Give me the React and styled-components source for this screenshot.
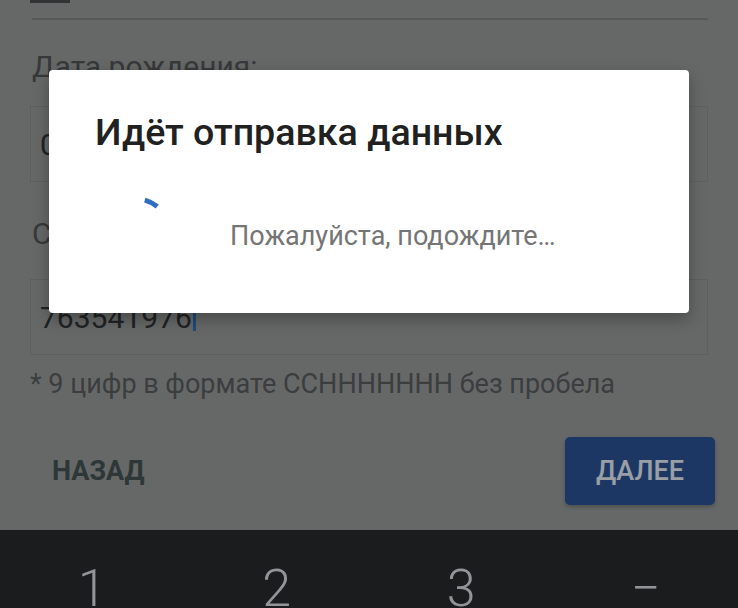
import React from 'react';
import styled, { createGlobalStyle } from 'styled-components';

const GlobalStyle = createGlobalStyle`
    html, body {
        margin: 0;
        padding: 0;
        background: #1b1c1e;
        font-family: Roboto, "Noto Sans", Arial, sans-serif;
    }
    * {
        box-sizing: border-box;
    }
`;

const Screen = styled.div`
    display: flex;
    flex-direction: column;
    width: 738px;
    height: 608px;
    overflow: hidden;
`;

const FormArea = styled.div`
    position: relative;
    height: 530px;
    flex-shrink: 0;
    padding: 0 23px 0 30px;
    background: #939596;
    overflow: hidden;
`;

const TopStub = styled.div`
    width: 40px;
    height: 3px;
    background: #484a4c;
`;

const Divider = styled.div`
    margin: 15px 7px 0 2px;
    height: 2px;
    background: #7c7e80;
`;

const Label = styled.div`
    margin-top: ${p => p.$top}px;
    padding-left: 2px;
    font-size: 30px;
    line-height: 34px;
    color: #4f5154;
`;

const Field = styled.div`
    display: flex;
    align-items: center;
    margin-top: ${p => p.$top}px;
    width: 678px;
    height: 76px;
    padding-left: 9px;
    border: 1px solid #86888b;
    font-size: 30px;
    color: #303133;
`;

const Caret = styled.span`
    display: inline-block;
    width: 3px;
    height: 28px;
    margin-left: 1px;
    background: #2c6ab7;
`;

const Hint = styled.div`
    margin-top: 14px;
    font-size: 27px;
    line-height: 30px;
    color: #56585b;
`;

const Actions = styled.div`
    display: flex;
    justify-content: space-between;
    align-items: center;
    margin-top: 38px;
`;

const TextButton = styled.button`
    border: none;
    background: none;
    padding: 0 0 0 22px;
    font-family: inherit;
    font-size: 27px;
    font-weight: 700;
    color: #43504f;
`;

const PrimaryButton = styled.button`
    width: 150px;
    height: 68px;
    border: none;
    border-radius: 5px;
    background: #29508f;
    box-shadow: 0 2px 4px rgba(0, 0, 0, 0.25);
    font-family: inherit;
    font-size: 27px;
    font-weight: 500;
    color: #dde3ec;
`;

const Backdrop = styled.div`
    position: absolute;
    inset: 0;
    display: flex;
    justify-content: center;
    align-items: flex-start;
    padding-top: 70px;
    background: rgba(0, 0, 0, 0.3);
`;

const Dialog = styled.div`
    width: 640px;
    height: 243px;
    padding: 40px 46px 0;
    background: #fff;
    border-radius: 4px;
    box-shadow: 0 6px 16px rgba(0, 0, 0, 0.3);
`;

const Title = styled.div`
    font-size: 37.6px;
    line-height: 44px;
    font-weight: 500;
    color: #212121;
`;

const Progress = styled.div`
    display: flex;
    align-items: center;
    margin-top: 41px;
    padding-left: 3px;
`;

const Message = styled.div`
    margin-left: 56px;
    padding-top: 6px;
    font-size: 27px;
    color: #757575;
`;

const Keyboard = styled.div`
    display: grid;
    grid-template-columns: repeat(4, 1fr);
    flex: 1;
    background: #1b1c1e;
`;

const Key = styled.div`
    padding-top: 33px;
    text-align: center;
    font-size: 52px;
    line-height: 1;
    font-weight: 300;
    color: #939497;
`;

const Spinner = () => (
    <svg width="76" height="76" viewBox="0 0 76 76">
        <circle
            cx="38"
            cy="38"
            r="34"
            fill="none"
            stroke="#2f6cc3"
            strokeWidth="5"
            strokeDasharray="14 400"
            transform="rotate(-75 38 38)"
        />
    </svg>
);

const App = () => (
    <Screen>
        <GlobalStyle />
        <FormArea>
            <TopStub />
            <Divider />
            <Label $top={30}>Дата рождения:</Label>
            <Field $top={22}>05.11.1985</Field>
            <Label $top={35}>Серия и номер паспорта:</Label>
            <Field $top={28}>
                763541976<Caret />
            </Field>
            <Hint>* 9 цифр в формате ССННННННН без пробела</Hint>
            <Actions>
                <TextButton>НАЗАД</TextButton>
                <PrimaryButton>ДАЛЕЕ</PrimaryButton>
            </Actions>
            <Backdrop>
                <Dialog>
                    <Title>Идёт отправка данных</Title>
                    <Progress>
                        <Spinner />
                        <Message>Пожалуйста, подождите…</Message>
                    </Progress>
                </Dialog>
            </Backdrop>
        </FormArea>
        <Keyboard>
            <Key>1</Key>
            <Key>2</Key>
            <Key>3</Key>
            <Key>−</Key>
        </Keyboard>
    </Screen>
);

export default App;
